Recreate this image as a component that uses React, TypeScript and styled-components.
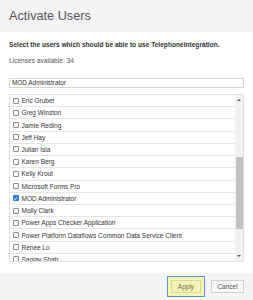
import React from "react";
import styled, { createGlobalStyle } from "styled-components";

const Global = createGlobalStyle`
  html, body { margin: 0; padding: 0; background: #fff; }
  body { font-family: "Liberation Sans", Arial, sans-serif; width: 253px; height: 300px; overflow: hidden; }
  * { box-sizing: border-box; }
`;

const Dialog = styled.div`
  width: 253px;
  height: 300px;
  display: flex;
  flex-direction: column;
  background: #fff;
`;

const Header = styled.div`
  height: 32px;
  flex: none;
  background: #f4f4f4;
  display: flex;
  align-items: center;
  padding-left: 9px;
`;

const Title = styled.h1`
  margin: 0;
  font-size: 12.7px;
  line-height: 1;
  font-weight: 400;
  color: #555;
`;

const Body = styled.div`
  flex: 1;
  display: flex;
  flex-direction: column;
  padding: 9px 9px 0 9px;
`;

const Intro = styled.p`
  margin: 0;
  font-size: 6.6px;
  line-height: 8px;
  font-weight: 700;
  color: #333;
`;

const Licenses = styled.p`
  margin: 8px 0 0 0;
  font-size: 6.6px;
  line-height: 8px;
  color: #555;
`;

const Search = styled.div`
  margin-top: 13px;
  height: 10px;
  border: 1px solid #d6d6d6;
  padding-left: 2px;
  font-size: 6.4px;
  line-height: 8px;
  color: #333;
`;

const ListBox = styled.div`
  margin-top: 6px;
  height: 168px;
  border: 1px solid #e0e0e0;
  display: flex;
  overflow: hidden;
`;

const Rows = styled.div`
  flex: 1;
  overflow: hidden;
  display: flex;
  flex-direction: column;
`;

const Row = styled.div`
  flex: none;
  height: 12.23px;
  border-bottom: 1px solid #e6e6e6;
  display: flex;
  align-items: center;
  padding-left: 2.5px;
  font-size: 6.5px;
  color: #333;
  white-space: nowrap;
`;

const Box = styled.span<{ $checked?: boolean }>`
  width: 6px;
  height: 6px;
  flex: none;
  margin-right: 3px;
  border: ${(p) => (p.$checked ? "none" : "1px solid #8a8a8a")};
  border-radius: 1px;
  background: ${(p) => (p.$checked ? "#2b78e4" : "#fff")};
  display: flex;
  align-items: center;
  justify-content: center;
`;

const Scrollbar = styled.div`
  width: 8px;
  flex: none;
  background: #f1f1f1;
  display: flex;
  flex-direction: column;
  align-items: center;
  padding-top: 4px;
`;

const Arrow = styled.div<{ $down?: boolean }>`
  width: 0;
  height: 0;
  border-left: 2px solid transparent;
  border-right: 2px solid transparent;
  ${(p) => (p.$down ? "border-top: 2px solid #555;" : "border-bottom: 2px solid #555;")}
`;

const Thumb = styled.div`
  width: 7px;
  height: 72px;
  margin-top: 56px;
  background: #c1c1c1;
`;

const Spacer = styled.div`
  flex: 1;
`;

const DownWrap = styled.div`
  margin-bottom: 4px;
`;

const Footer = styled.div`
  height: 27px;
  flex: none;
  background: #f4f4f4;
  display: flex;
  align-items: center;
  justify-content: flex-end;
  padding-right: 9px;
  gap: 7px;
`;

const Button = styled.button<{ $primary?: boolean }>`
  font-family: "Liberation Sans", Arial, sans-serif;
  font-size: 6.5px;
  height: 13px;
  padding: 0;
  width: ${(p) => (p.$primary ? "30px" : "33px")};
  color: ${(p) => (p.$primary ? "#6b6b4a" : "#555")};
  background: ${(p) => (p.$primary ? "#f3f3b4" : "#f7f7f7")};
  border: 1px solid ${(p) => (p.$primary ? "#d9d99c" : "#d0d0d0")};
  box-shadow: ${(p) =>
    p.$primary ? "0 0 0 3px #f4f4b0, 0 0 0 4px #5f95d6" : "none"};
  margin-right: ${(p) => (p.$primary ? "3px" : "0")};
`;

const users = [
  "Eric Gruber",
  "Greg Winston",
  "Jamie Reding",
  "Jeff Hay",
  "Julian Isla",
  "Karen Berg",
  "Kelly Krout",
  "Microsoft Forms Pro",
  "MOD Administrator",
  "Molly Clark",
  "Power Apps Checker Application",
  "Power Platform Dataflows Common Data Service Client",
  "Renee Lo",
  "Sanjay Shah",
];

export default function App() {
  return (
    <>
      <Global />
      <Dialog>
        <Header>
          <Title>Activate Users</Title>
        </Header>
        <Body>
          <Intro>Select the users which should be able to use TelephoneIntegration.</Intro>
          <Licenses>Licenses available: 34</Licenses>
          <Search>MOD Administrator</Search>
          <ListBox>
            <Rows>
              {users.map((u) => {
                const checked = u === "MOD Administrator";
                return (
                  <Row key={u}>
                    <Box $checked={checked}>
                      {checked && (
                        <svg width="5" height="5" viewBox="0 0 10 10">
                          <path d="M2 5.2 L4.2 7.3 L8.3 2.6" fill="none" stroke="#fff" strokeWidth="1.8" />
                        </svg>
                      )}
                    </Box>
                    {u}
                  </Row>
                );
              })}
            </Rows>
            <Scrollbar>
              <Arrow />
              <Thumb />
              <Spacer />
              <DownWrap>
                <Arrow $down />
              </DownWrap>
            </Scrollbar>
          </ListBox>
          <Spacer />
        </Body>
        <Footer>
          <Button $primary>Apply</Button>
          <Button>Cancel</Button>
        </Footer>
      </Dialog>
    </>
  );
}
